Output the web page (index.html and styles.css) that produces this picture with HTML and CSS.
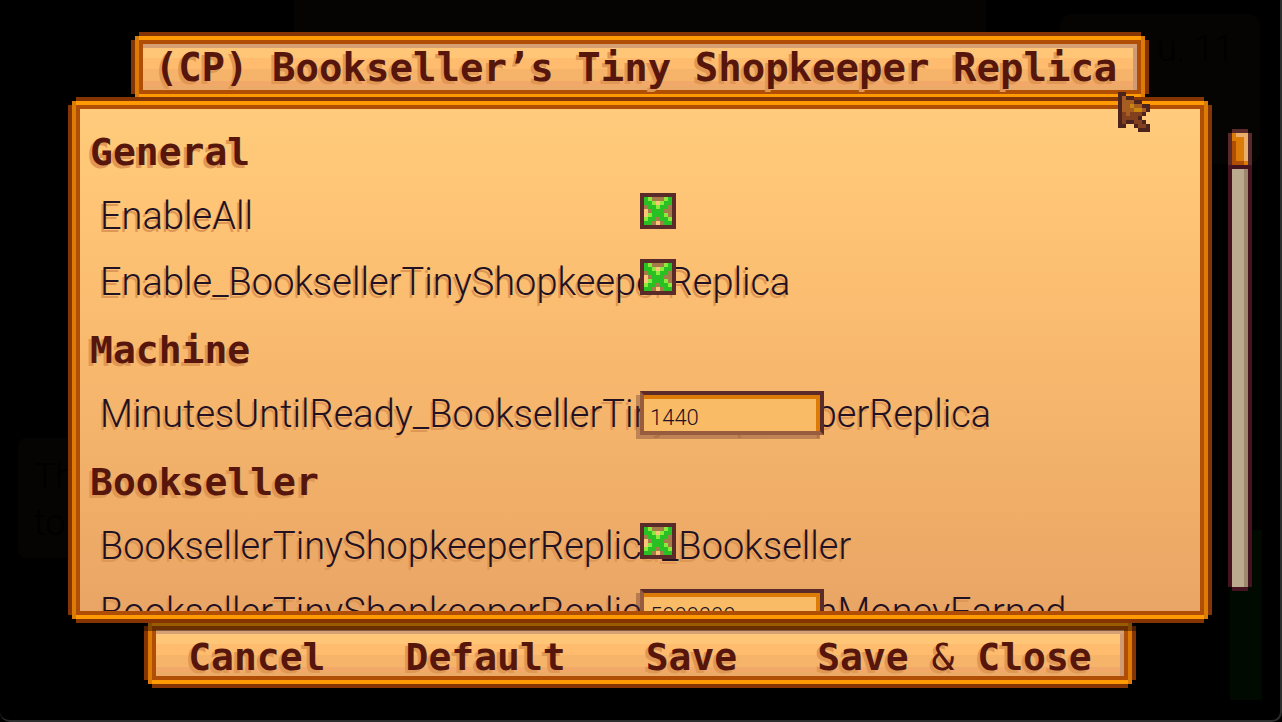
FILE: index.html
```html
<!DOCTYPE html>
<html lang="en">
<head>
<meta charset="utf-8">
<title>Mod options</title>
<link rel="stylesheet" href="styles.css">
</head>
<body>
<svg class="defs" aria-hidden="true">
  <symbol id="tick" viewBox="0 0 7 7" shape-rendering="crispEdges">
    <path fill="#a67b4a" d="M0 0h7v7H0z"/>
    <path fill="#fdc47a" d="M3 1h1v1H3zM0 3h1v2H0zM3 6h1v1H3z"/>
    <path fill="#28c023" d="M0 0h1v1h1v1h1v1h1v-1h1v-1h1v-1h1v2h-1v1h-1v2h1v1h1v1h-2v-1h-1v-1h-1v1h-1v1H0v-1h1v-1h1V3H1V2H0z"/>
    <path fill="#8ceb3a" d="M1 0h1v1H1zM5 0h1v1H5zM2 1h1v1H2zM4 1h1v1H4zM3 2h1v1H3zM1 4h1v1H1zM5 4h1v1H5zM0 5h1v1H0zM6 5h1v1H6z"/>
  </symbol>
</svg>
<div class="stage">
  <div class="world" aria-hidden="true">
    <div class="scene"></div>
    <div class="clock">u. 11</div>
    <div class="quest">Th<br>to</div>
    <div class="energy"></div>
  </div>

  <header class="header">
    <h1 class="frame title">(CP) Bookseller’s Tiny Shopkeeper Replica</h1>
  </header>

  <main class="main">
    <form class="frame panel" id="options">
      <h2 class="row section">General</h2>
      <div class="row">
        <label class="name" for="all">EnableAll</label>
        <span class="check"><input type="checkbox" id="all" checked><svg class="mark"><use href="#tick"/></svg></span>
      </div>
      <div class="row">
        <label class="name" for="replica">Enable_BooksellerTinyShopkeeperReplica</label>
        <span class="check"><input type="checkbox" id="replica" checked><svg class="mark"><use href="#tick"/></svg></span>
      </div>
      <h2 class="row section">Machine</h2>
      <div class="row">
        <label class="name" for="minutes">MinutesUntilReady_BooksellerTinyShopkeeperReplica</label>
        <input class="field" type="text" id="minutes" value="1440">
      </div>
      <h2 class="row section">Bookseller</h2>
      <div class="row">
        <label class="name" for="seller">BooksellerTinyShopkeeperReplica_Bookseller</label>
        <span class="check"><input type="checkbox" id="seller" checked><svg class="mark"><use href="#tick"/></svg></span>
      </div>
      <div class="row">
        <label class="name" for="money">BooksellerTinyShopkeeperReplica_MinimumMoneyEarned</label>
        <input class="field" type="text" id="money" value="5000000">
      </div>
    </form>
    <div class="scrollbar" aria-hidden="true">
      <svg class="thumb" viewBox="0 0 6 10" shape-rendering="crispEdges">
        <path fill="#5a2a2a" d="M1 0h4v1h1v8H0V1h1z"/>
        <path fill="#45121f" d="M0 9h6v1H0z"/>
        <path fill="#dc7b05" d="M1 1h4v8H1z"/>
        <path fill="#b14e05" d="M1 3h1v5h2v1H1z"/>
        <path fill="#e9ae6c" d="M2 1h3v7H4V2H2z"/>
      </svg>
      <div class="track"></div>
    </div>
  </main>

  <footer class="footer">
    <div class="frame actions">
      <button type="button">Cancel</button>
      <button type="button">Default</button>
      <button type="button">Save</button>
      <button type="button">Save <span class="amp">&amp;</span> Close</button>
    </div>
  </footer>

  <svg class="cursor" viewBox="0 0 8 10" shape-rendering="crispEdges" aria-hidden="true">
    <path fill="#4d231e" d="M0 0h2v1h2v1h2v1h2v2h-1v1h-1v1h1v1h1v2h-3v-1h-1v-1h-2v1H0z"/>
    <path fill="#82401f" d="M1 1h1v1h2v1h2v1h1v1h-1v1h-1v1h1v1h1v1h-2v-1h-1v-1h-2v1H1z"/>
    <path fill="#a75c22" d="M1 1h1v1h2v1h2v1h1v1h-4v1h-1v-1h-1z"/>
    <path fill="#c8860d" d="M3 3h1v1h2v1H4V4H3z"/>
  </svg>
</div>
</body>
</html>
```

FILE: styles.css
```css
* {
  box-sizing: border-box;
}

body {
  margin: 0;
  background: #000;
}

.defs {
  display: none;
}

.stage {
  position: relative;
  display: flex;
  flex-direction: column;
  gap: 11px;
  height: 100vh;
  padding: 40px 0;
  overflow: hidden;
  border: solid #2e2e2e;
  border-width: 0 2px 2px 0;
  border-radius: 0 0 10px 10px;
}

/* Darkened game scene behind the menu */
.world {
  position: absolute;
  inset: 0;
  color: #000;
  font: 300 36px/46px Roboto, sans-serif;
}

.scene,
.clock,
.quest,
.energy {
  position: absolute;
  background: #050402;
}

.scene {
  top: 0;
  left: 23%;
  right: 23%;
  height: 90px;
}

.clock {
  top: 14px;
  right: 20px;
  width: 200px;
  height: 150px;
  padding: 12px 26px;
  text-align: right;
  border-radius: 12px;
}

.quest {
  top: 438px;
  left: 18px;
  width: 120px;
  height: 120px;
  padding: 16px;
  border-radius: 8px;
}

.energy {
  right: 18px;
  bottom: 20px;
  width: 32px;
  height: 170px;
  background: #000a00;
}

/* Carved wooden border shared by every box */
.frame {
  margin: 0;
  border: 4px solid #b14e05;
  box-shadow:
    0 -4px #ff9a05,
    0 4px #ff9a05,
    0 0 0 4px #dc7b05,
    0 -8px #853504,
    0 8px #853504,
    -8px 0 #853504,
    8px 0 #853504;
}

.header,
.footer {
  position: relative;
  display: flex;
  justify-content: center;
}

.title,
.section,
.actions button {
  color: #56160c;
  font: bold 38px/46px "DejaVu Sans Mono", monospace;
  text-shadow: -3px 3px #df9755;
}

.title,
.actions {
  background:
    linear-gradient(#d79f74, #d79f74) top / 100% 4px no-repeat,
    linear-gradient(#cf9a74, #cf9a74) right / 4px 100% no-repeat,
    linear-gradient(#ffc678 30%, #ffbc6e 30% 55%, #f5b46a 55% 80%, #f2a868 80% 92%, #ebaa67 92%);
}

.title {
  padding: 2px 20px 0 12px;
  font-size: 39px;
  line-height: 44px;
  white-space: nowrap;
}

.main {
  position: relative;
  z-index: 1;
  display: flex;
  flex: 1;
  gap: 24px;
  min-height: 0;
  padding: 0 28px 0 76px;
}

.panel {
  flex: 1;
  min-width: 0;
  padding-top: 18px;
  overflow: hidden;
  background: linear-gradient(#ffcb7c, #ffc475 20%, #f5b56c 60%, #e9a565);
  box-shadow:
    0 -4px #ff9a05,
    0 4px #ff9a05,
    0 0 0 4px #dc7b05,
    0 -8px #853504,
    0 8px #853504,
    -8px 0 #853504,
    8px 0 #853504,
    0 16px rgba(0, 0, 0, 0.4);
}

.row {
  display: grid;
  grid-template-columns: 1fr 1fr;
  align-items: start;
  height: 66px;
  margin: 0;
}

.section {
  padding: 2px 0 0 10px;
}

.name {
  grid-area: 1 / 1 / 2 / 3;
  padding-left: 20px;
  color: #221122;
  font: 300 38px/46px Roboto, sans-serif;
  white-space: nowrap;
  text-shadow: -2px 3px #df9755;
}

.check {
  display: grid;
  grid-area: 1 / 2 / 2 / 3;
  width: 36px;
  height: 36px;
}

.check input {
  grid-area: 1 / 1;
  width: 36px;
  height: 36px;
  margin: 0;
  appearance: none;
  border: 4px solid #5b2b2a;
  background: #a67b4a;
}

.mark {
  grid-area: 1 / 1;
  width: 28px;
  height: 28px;
  margin: 4px;
  pointer-events: none;
  visibility: hidden;
}

.check input:checked + .mark {
  visibility: visible;
}

.field {
  grid-area: 1 / 2 / 2 / 3;
  width: 184px;
  height: 44px;
  padding: 8px 6px 0;
  color: #221122;
  font: 300 22px/28px Roboto, sans-serif;
  border: 4px solid;
  border-color: #5b2b2a #5b2b2a #975c3d #975c3d;
  border-radius: 0;
  background: #f9bb66;
  box-shadow:
    inset -4px 4px #dc7b05,
    -4px 4px rgba(91, 43, 42, 0.35);
}

.scrollbar {
  display: flex;
  flex-direction: column;
  width: 24px;
  margin: 24px 0;
}

.thumb {
  display: block;
  width: 24px;
  height: 40px;
}

.track {
  position: relative;
  flex: 1;
  margin-bottom: 4px;
  border: solid #45121f;
  border-width: 0 4px;
  background: linear-gradient(90deg, #bcaa8e 12px, #9f866f 12px);
}

.track::after {
  content: "";
  position: absolute;
  top: 100%;
  left: 0;
  right: 0;
  height: 4px;
  background: #45121f;
}

.actions {
  display: flex;
  gap: 80px;
  padding: 0 32px 0 32px;
}

.actions button {
  padding: 8px 0 0;
  line-height: 38px;
  border: 0;
  background: none;
  white-space: nowrap;
}

.amp {
  font-weight: normal;
}

.cursor {
  position: absolute;
  z-index: 2;
  top: 92px;
  right: 130px;
  width: 32px;
  height: 40px;
}
```
